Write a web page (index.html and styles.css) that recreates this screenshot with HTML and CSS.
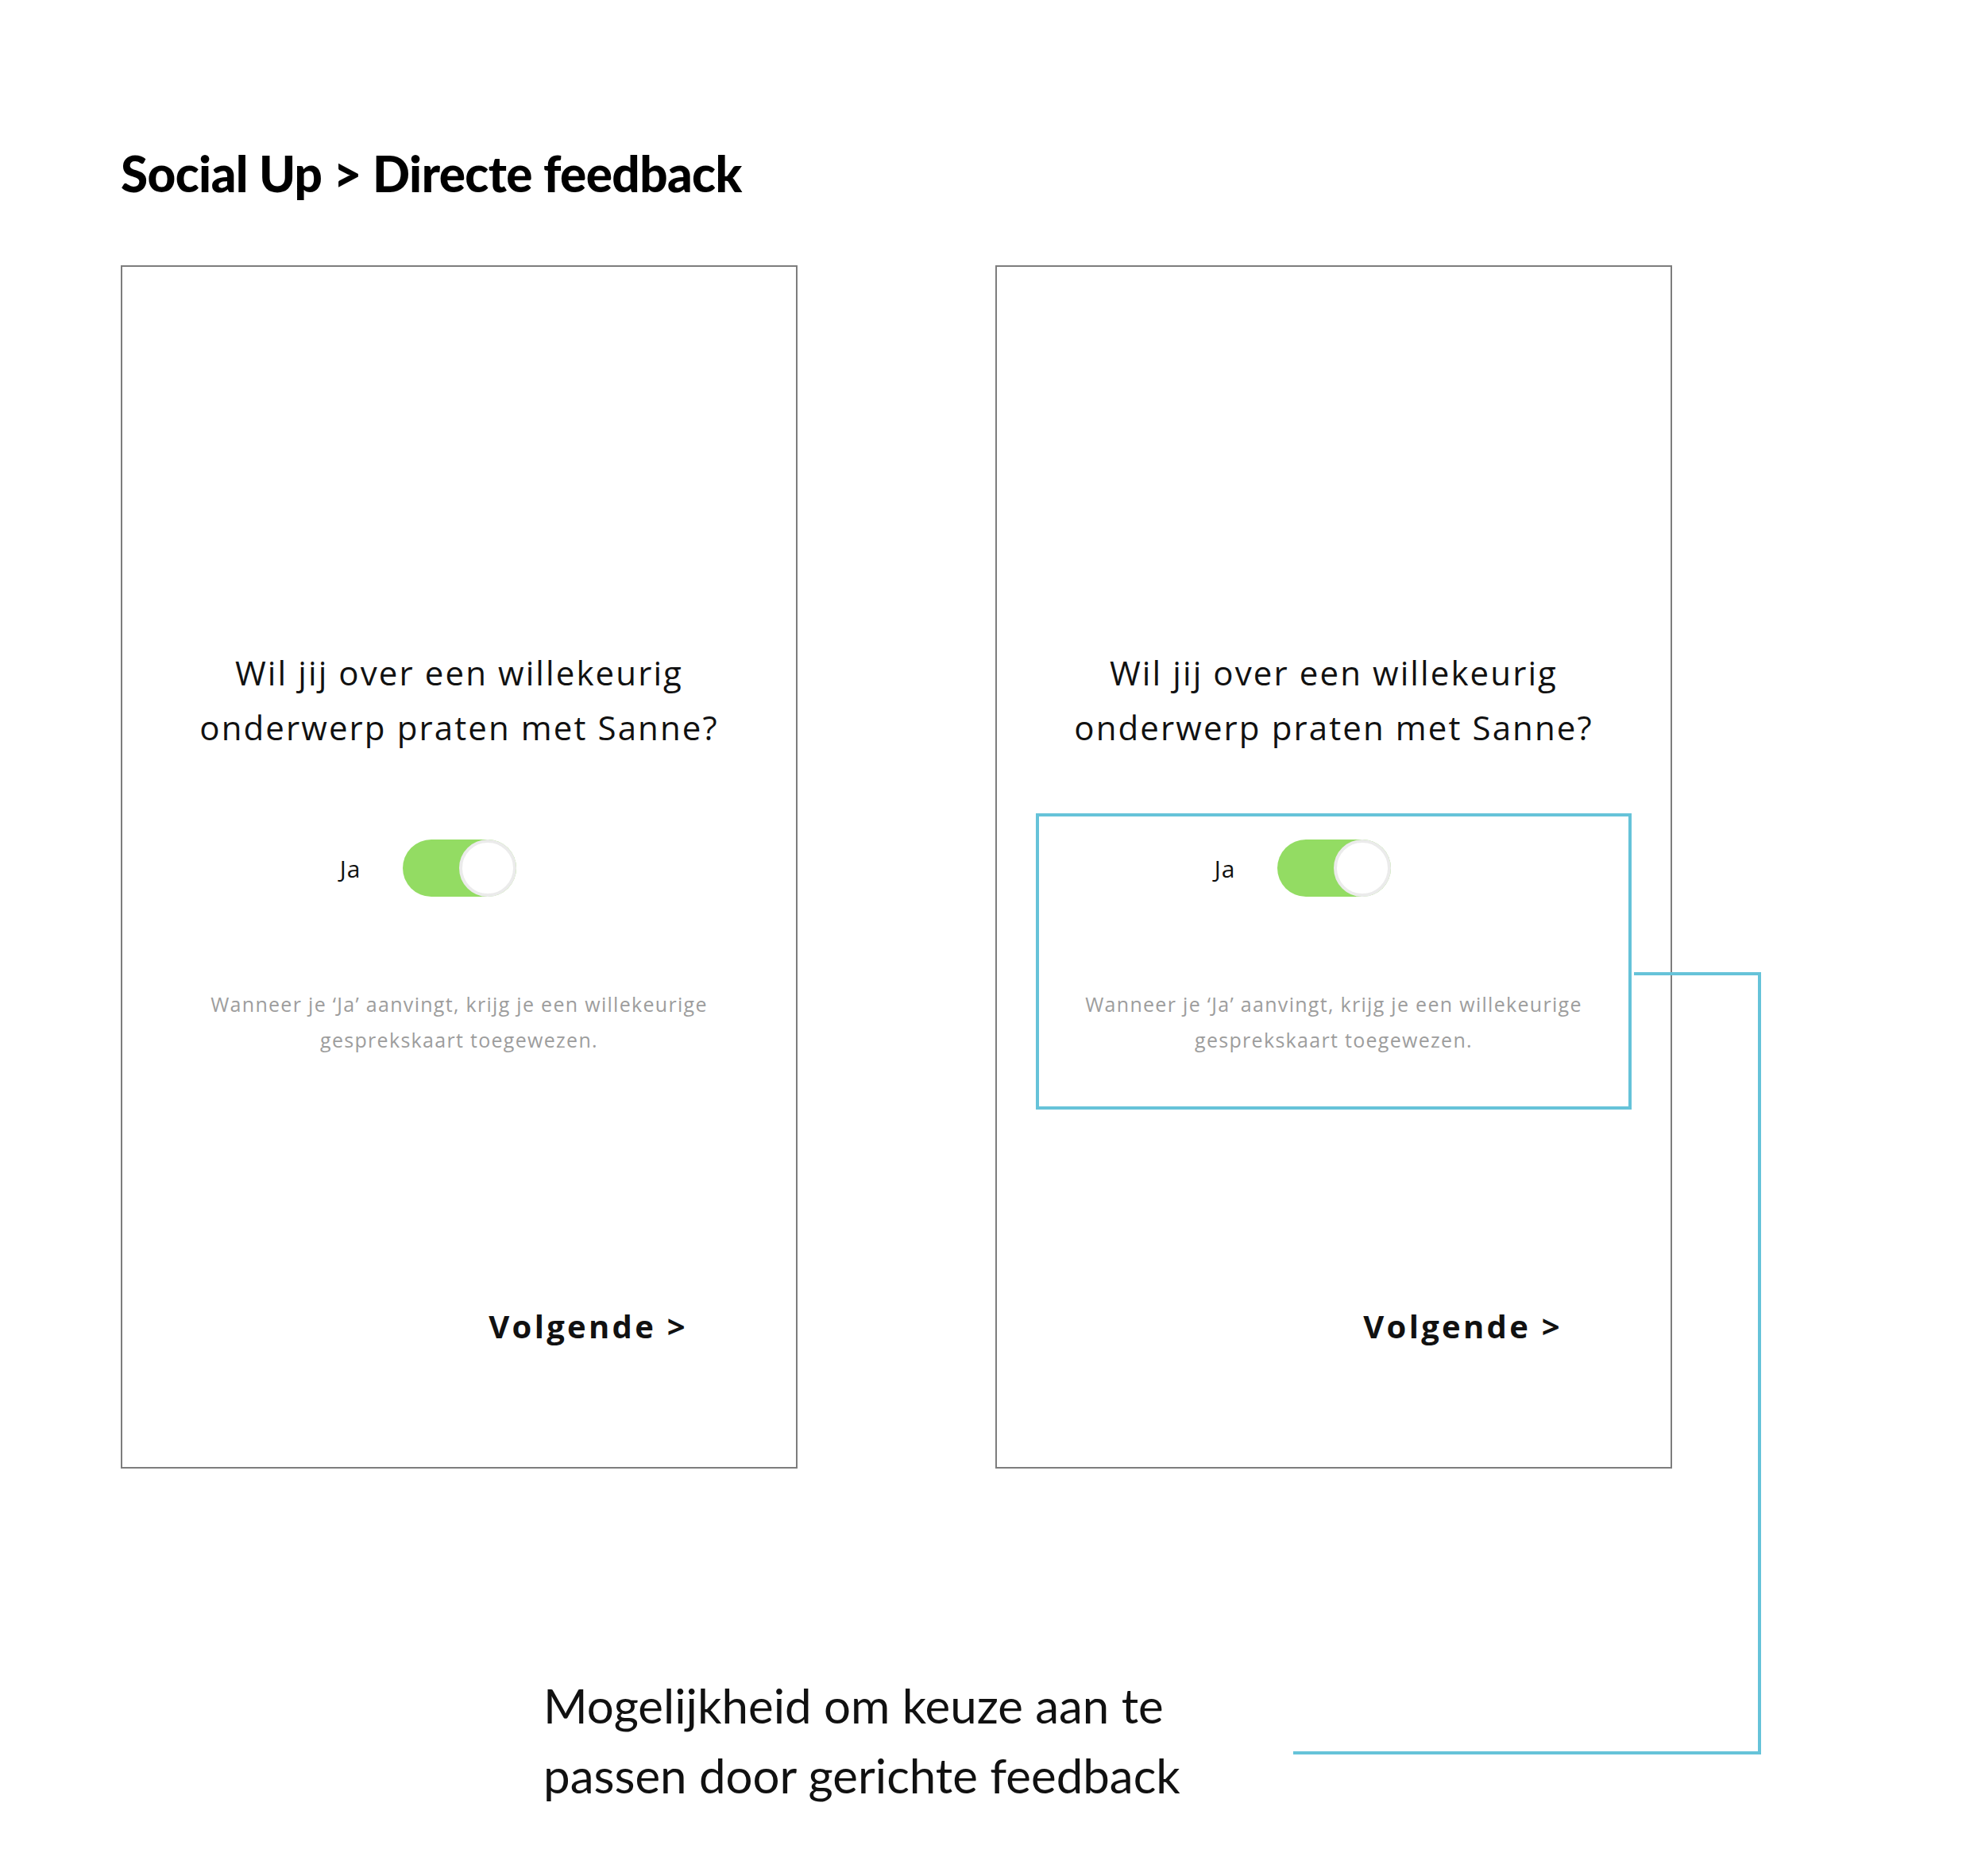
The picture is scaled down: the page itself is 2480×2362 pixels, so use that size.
FILE: index.html
```html
<!DOCTYPE html>
<html lang="nl">
<head>
<meta charset="utf-8">
<title>Social Up &gt; Directe feedback</title>
<link rel="stylesheet" href="styles.css">
</head>
<body>
<div class="page">
  <h1 class="title">Social Up &gt; Directe feedback</h1>
  <div class="screens">
    <section class="screen">
      <p class="question">Wil jij over een willekeurig<br>onderwerp praten met Sanne?</p>
      <div class="choice">
        <div class="toggle-row">
          <span class="toggle-label">Ja</span>
          <span class="toggle"><span class="knob"></span></span>
          <span></span>
        </div>
        <p class="hint">Wanneer je ‘Ja’ aanvingt, krijg je een willekeurige<br>gesprekskaart toegewezen.</p>
      </div>
      <div class="next">Volgende &gt;</div>
    </section>
    <section class="screen">
      <p class="question">Wil jij over een willekeurig<br>onderwerp praten met Sanne?</p>
      <div class="choice highlighted">
        <div class="toggle-row">
          <span class="toggle-label">Ja</span>
          <span class="toggle"><span class="knob"></span></span>
          <span></span>
        </div>
        <p class="hint">Wanneer je ‘Ja’ aanvingt, krijg je een willekeurige<br>gesprekskaart toegewezen.</p>
      </div>
      <div class="next">Volgende &gt;</div>
    </section>
  </div>
  <p class="annotation">Mogelijkheid om keuze aan te<br>passen door gerichte feedback</p>
  <svg class="connector" width="2480" height="2362" viewBox="0 0 2480 2362">
    <polyline points="2057,1226 2215,1226 2215,2207 1628,2207" fill="none" stroke="#66c3d9" stroke-width="4"/>
  </svg>
</div>
</body>
</html>
```
FILE: styles.css
```css
html, body {
  margin: 0;
  padding: 0;
  background: #ffffff;
}
.page {
  position: relative;
  width: 2480px;
  height: 2362px;
  padding-left: 152px;
  box-sizing: border-box;
  overflow: hidden;
}
.title {
  margin: 0;
  padding-top: 178px;
  font-family: "Lato", "Noto Sans", sans-serif;
  font-weight: 900;
  font-size: 62px;
  line-height: 80px;
  color: #000;
  letter-spacing: -0.6px;
}
.screens {
  display: flex;
  gap: 249px;
  margin-top: 76px;
}
.screen {
  width: 852px;
  height: 1515px;
  box-sizing: border-box;
  border: 2px solid #7d7d7d;
  display: flex;
  flex-direction: column;
  align-items: stretch;
  font-family: "Open Sans", sans-serif;
}
.question {
  margin: 476px 0 0;
  text-align: center;
  font-size: 42px;
  line-height: 69px;
  letter-spacing: 2.1px;
  color: #111;
  font-weight: 400;
}
.choice {
  margin: 74px 49px 0 49px;
  padding-top: 29px;
  height: 373px;
  box-sizing: border-box;
  border: 4px solid transparent;
}
.choice.highlighted {
  border-color: #66c3d9;
}
.toggle-row {
  display: grid;
  grid-template-columns: 1fr auto 1fr;
  align-items: center;
}
.toggle-label {
  justify-self: end;
  margin-right: 52px;
  font-size: 30px;
  color: #111;
  letter-spacing: 1px;
}
.toggle {
  position: relative;
  display: block;
  width: 143px;
  height: 72px;
  border-radius: 36px;
  background: #93dc63;
}
.knob {
  position: absolute;
  right: 0;
  top: 0;
  width: 72px;
  height: 72px;
  box-sizing: border-box;
  border-radius: 50%;
  background: #fff;
  border: 4px solid #ebebeb;
}
.hint {
  margin: 113px 0 0;
  text-align: center;
  font-size: 25px;
  line-height: 45px;
  letter-spacing: 1.3px;
  color: #9d9d9d;
}
.next {
  margin-top: 245px;
  align-self: flex-end;
  margin-right: 136px;
  font-weight: 700;
  font-size: 40px;
  line-height: 56px;
  letter-spacing: 3.3px;
  color: #111;
}
.annotation {
  margin: 254px 0 0 532px;
  font-family: "Lato", "Noto Sans", sans-serif;
  font-size: 60px;
  line-height: 88px;
  color: #111;
}
.connector {
  position: absolute;
  left: 0;
  top: 0;
  pointer-events: none;
}
```
